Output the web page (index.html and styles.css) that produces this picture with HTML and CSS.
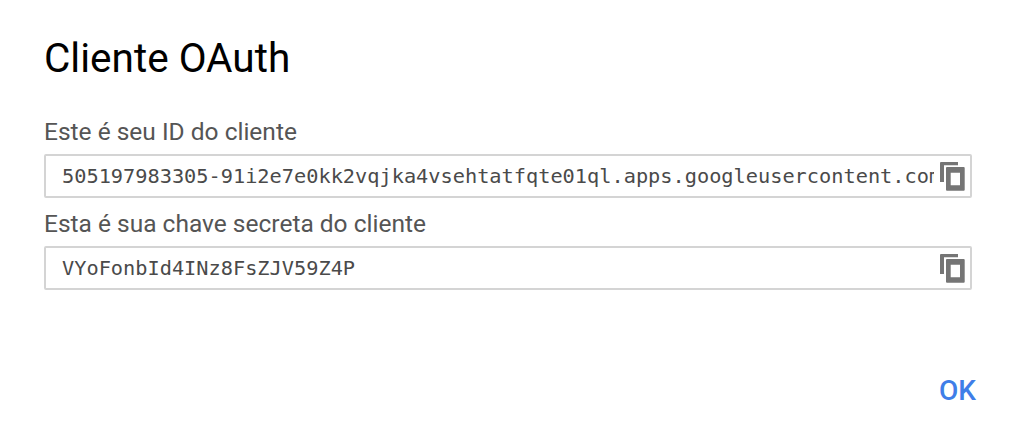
FILE: index.html
```html
<!DOCTYPE html>
<html lang="pt">
<head>
<meta charset="utf-8">
<title>Cliente OAuth</title>
<link rel="stylesheet" href="styles.css">
</head>
<body>
<main class="dialog">
  <h1 class="title">Cliente OAuth</h1>
  <div class="fields">
    <label class="label">Este é seu ID do cliente</label>
    <div class="field">
      <span class="value">505197983305-91i2e7e0kk2vqjka4vsehtatfqte01ql.apps.googleusercontent.com</span>
      <svg class="copy" viewBox="0 0 25 29" aria-hidden="true"><path fill-rule="evenodd" d="M1 0H18V3.300H4V20H0V1a1 1 0 0 1 1-1zM7 5H23.700a1 1 0 0 1 1 1V27.700a1 1 0 0 1-1 1H7a1 1 0 0 1-1-1V6a1 1 0 0 1 1-1zM10.700 10.700V23.300H20V10.700z"/></svg>
    </div>
    <label class="label second">Esta é sua chave secreta do cliente</label>
    <div class="field">
      <span class="value">VYoFonbId4INz8FsZJV59Z4P</span>
      <svg class="copy" viewBox="0 0 25 29" aria-hidden="true"><path fill-rule="evenodd" d="M1 0H18V3.300H4V20H0V1a1 1 0 0 1 1-1zM7 5H23.700a1 1 0 0 1 1 1V27.700a1 1 0 0 1-1 1H7a1 1 0 0 1-1-1V6a1 1 0 0 1 1-1zM10.700 10.700V23.300H20V10.700z"/></svg>
    </div>
  </div>
  <div class="actions"><button class="ok">OK</button></div>
</main>
</body>
</html>
```
FILE: styles.css
```css
html, body { margin: 0; padding: 0; background: #fff; }
body { width: 1016px; height: 436px; overflow: hidden; font-family: Roboto, sans-serif; }
.dialog { padding: 35px 44px 0 44px; box-sizing: border-box; height: 436px; display: flex; flex-direction: column; }
.title { margin: 0; font-size: 40.5px; font-weight: 400; line-height: 46px; color: #000; }
.fields { margin-top: 35px; display: flex; flex-direction: column; }
.label { font-size: 24.5px; line-height: 32px; color: #555; display: block; margin-bottom: 6px; }
.label.second { margin-top: 10px; margin-bottom: 6px; }
.field { width: 928px; height: 44px; box-sizing: border-box; border: 2px solid #d4d4d4; border-radius: 2px; display: flex; align-items: center; padding-left: 16px; position: relative; }
.value { font-family: "DejaVu Sans Mono", monospace; font-size: 20.3px; color: #4a4a4a; width: 872px; overflow: hidden; white-space: nowrap; }
.copy { position: absolute; left: 894px; top: 6px; width: 25px; height: 29px; fill: #757575; }
.actions { margin-top: 84px; display: flex; justify-content: flex-end; }
.ok { background: none; border: 0; padding: 0; margin-right: -4px; font-family: Roboto, sans-serif; font-weight: 500; font-size: 28px; line-height: 34px; color: #3f7ee8; }
```
